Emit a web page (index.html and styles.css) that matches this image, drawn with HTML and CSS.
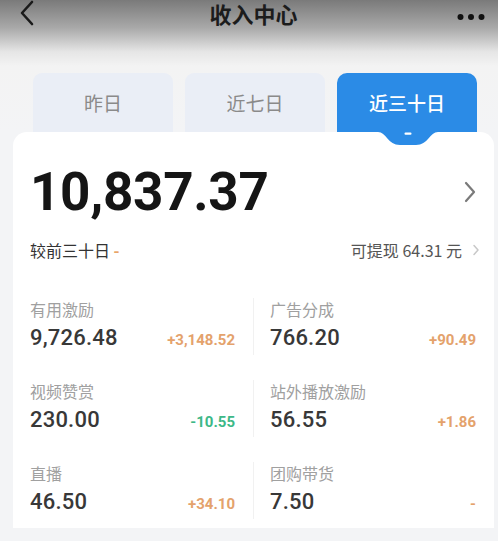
FILE: index.html
```html
<!DOCTYPE html>
<html lang="zh">
<head>
<meta charset="utf-8">
<link rel="stylesheet" href="styles.css">
</head>
<body>
<div class="page">
  <div class="top">
    <div class="nav">
      <svg class="back" width="16" height="26" viewBox="0 0 16 26"><path d="M13 2 L3 13 L13 24" fill="none" stroke="#1a1a1a" stroke-width="2.6" stroke-linecap="round" stroke-linejoin="round"/></svg>
      <div class="title">收入中心</div>
      <svg class="more" width="28" height="8" viewBox="0 0 28 8"><circle cx="3.5" cy="4" r="3" fill="#111"/><circle cx="14" cy="4" r="3" fill="#111"/><circle cx="24.5" cy="4" r="3" fill="#111"/></svg>
    </div>
    <div class="tabs">
      <div class="tab">昨日</div>
      <div class="tab">近七日</div>
      <div class="tab active">近三十日
        <svg class="bump" width="60" height="14" viewBox="0 0 60 14"><path d="M0 0 C8 0 10 13 22 13 L38 13 C50 13 52 0 60 0 Z" fill="#2b8be6"/><rect x="26.5" y="0.5" width="7" height="2.2" rx="1" fill="#fff"/></svg>
      </div>
    </div>
  </div>
  <div class="card">
    <div class="total-row">
      <div class="total">10,837.37</div>
      <svg class="arrow" width="12" height="22" viewBox="0 0 12 22"><path d="M2 2 L10 11 L2 20" fill="none" stroke="#7a7a7a" stroke-width="2.2" stroke-linecap="round" stroke-linejoin="round"/></svg>
    </div>
    <div class="sub-row">
      <div class="cmp">较前三十日 <span class="orange">-</span></div>
      <div class="withdraw">可提现 64.31 元
        <svg class="small-arrow" width="8" height="12" viewBox="0 0 8 12"><path d="M2 1.5 L6 6 L2 10.5" fill="none" stroke="#c8c8c8" stroke-width="1.5" stroke-linecap="round" stroke-linejoin="round"/></svg>
      </div>
    </div>
    <div class="grid">
      <div class="cell">
        <div class="label">有用激励</div>
        <div class="vals"><span class="val">9,726.48</span><span class="delta up">+3,148.52</span></div>
      </div>
      <div class="cell right">
        <div class="label">广告分成</div>
        <div class="vals"><span class="val">766.20</span><span class="delta up">+90.49</span></div>
      </div>
      <div class="cell">
        <div class="label">视频赞赏</div>
        <div class="vals"><span class="val">230.00</span><span class="delta down">-10.55</span></div>
      </div>
      <div class="cell right">
        <div class="label">站外播放激励</div>
        <div class="vals"><span class="val">56.55</span><span class="delta up">+1.86</span></div>
      </div>
      <div class="cell">
        <div class="label">直播</div>
        <div class="vals"><span class="val">46.50</span><span class="delta up">+34.10</span></div>
      </div>
      <div class="cell right">
        <div class="label">团购带货</div>
        <div class="vals"><span class="val">7.50</span><span class="delta up">-</span></div>
      </div>
    </div>
  </div>
</div>
</body>
</html>
```
FILE: styles.css
```css
* { box-sizing: border-box; }
html, body { margin: 0; padding: 0; }
body {
  width: 498px;
  height: 541px;
  overflow: hidden;
  background: #f3f4f6;
  font-family: "Noto Sans CJK SC", "Noto Sans", sans-serif;
  color: #222;
}
.top {
  background: linear-gradient(180deg, #7a7a7a 0px, #a9a9a9 28px, #e6e6e6 52px, #f3f3f3 66px, #f3f4f6 100%);
}
.nav {
  height: 73px;
  display: grid;
  grid-template-columns: 1fr auto 1fr;
  align-items: start;
  padding: 0 13px 0 19px;
}
.back { margin-top: 0px; }
.title {
  font-size: 22px;
  font-weight: 700;
  color: #1c1c1c;
  line-height: 26px;
  padding-top: 0;
  margin-left: 3px;
}
.more { margin-top: 13px; justify-self: end; }
.tabs {
  display: grid;
  grid-template-columns: repeat(3, 140px);
  gap: 12px;
  padding-left: 33px;
}
.tab {
  position: relative;
  height: 59px;
  border-radius: 9px 9px 0 0;
  background: #eaeef6;
  color: #8a8a8a;
  font-size: 19px;
  display: flex;
  align-items: center;
  justify-content: center;
}
.tab.active {
  background: #2b8be6;
  color: #fff;
  font-weight: 500;
  border-radius: 10px 10px 0 0;
}
.bump {
  position: absolute;
  left: 41px;
  top: 59px;
  z-index: 2;
}
.card {
  position: relative;
  margin: 0 4px 0 13px;
  height: 396px;
  background: #fff;
  border-radius: 14px 14px 0 0;
  padding: 28px 18px 0 17px;
}
.total-row {
  display: flex;
  align-items: center;
  justify-content: space-between;
}
.total {
  font-family: "Roboto", sans-serif;
  font-size: 53px;
  font-weight: 700;
  color: #151515;
  line-height: 64px;
  letter-spacing: -0.3px;
}
.sub-row {
  margin-top: 15px;
  display: flex;
  align-items: center;
  justify-content: space-between;
  font-size: 16px;
  line-height: 22px;
}
.cmp { color: #333; }
.orange { color: #e8a468; font-weight: 700; }
.withdraw {
  color: #555;
  display: flex;
  align-items: center;
  gap: 10px;
  margin-right: -4px;
}
.grid {
  margin-top: 37px;
  display: grid;
  grid-template-columns: 1fr 1fr;
  row-gap: 25px;
}
.cell {
  padding-right: 18px;
}
.cell.right {
  border-left: 1px solid #f1f1f1;
  padding-left: 16px;
  padding-right: 0;
}
.label {
  font-size: 16px;
  color: #a0a0a0;
  line-height: 22px;
}
.vals {
  display: flex;
  align-items: baseline;
  justify-content: space-between;
  line-height: 30px;
  margin-top: 3px;
}
.val {
  font-family: "Roboto", sans-serif;
  font-size: 22px;
  font-weight: 500;
  color: #383838;
  letter-spacing: 0.2px;
}
.delta {
  font-family: "Roboto", sans-serif;
  font-size: 15px;
  font-weight: 700;
}
.delta.up { color: #e4a26c; }
.delta.down { color: #3db887; }
```
